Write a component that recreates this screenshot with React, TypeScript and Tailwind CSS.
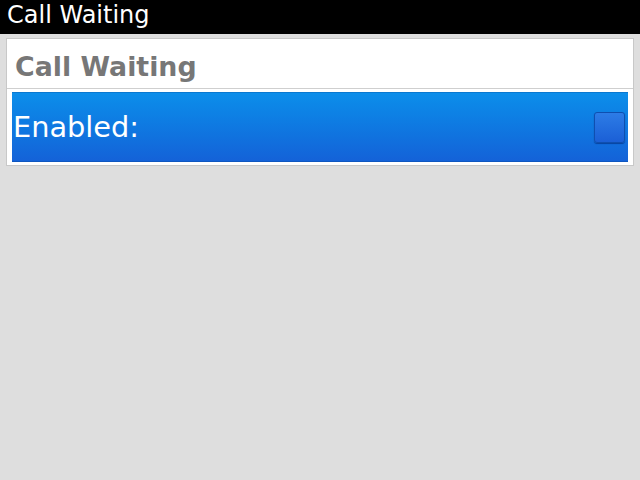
import React from "react";

export default function App() {
  return (
    <div className="w-[640px] h-[480px] bg-[#dedede] flex flex-col" style={{ fontFamily: '"DejaVu Sans", sans-serif' }}>
      <div className="h-[34px] bg-black text-white text-[24px] leading-[30px] pl-[7px] shrink-0">
        Call Waiting
      </div>
      <div className="mt-[4px] mx-[6px] border border-[#c8c8c8] bg-white flex flex-col">
        <div className="h-[49px] flex items-center pl-[8px] pt-[7px] text-[26.8px] font-bold text-[#777777]">
          Call Waiting
        </div>
        <div className="h-px bg-[#cfcfcf]" />
        <div className="px-[5px] pt-[3px] pb-[3px]">
          <div className="h-[70px] border-t border-b border-t-[#0a78d0] border-b-[#0e56c0] bg-gradient-to-b from-[#0c8eea] to-[#1462d8] flex items-center justify-between pl-[1px] pr-[3px]">
            <span className="text-white text-[28.8px] leading-none">Enabled:</span>
            <div className="w-[31px] h-[31px] rounded-[3px] border border-[#0f4fb0] bg-gradient-to-b from-[#2d7ce6] to-[#1b5fd6] shadow-[0_1px_1px_rgba(0,40,120,0.6)]" />
          </div>
        </div>
      </div>
    </div>
  );
}
